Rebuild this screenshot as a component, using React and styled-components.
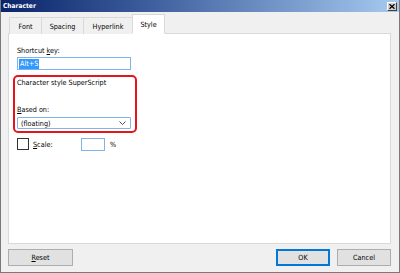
import React from "react"
import styled, { createGlobalStyle } from "styled-components"

const GlobalStyle = createGlobalStyle`
    html, body {
        margin: 0;
        padding: 0;
        background: #f0f0f0;
    }
    * {
        box-sizing: border-box;
    }
`

const Window = styled.div`
    width: 400px;
    height: 273px;
    background: #f0f0f0;
    border: 1px solid #7a7a7a;
    border-top: none;
    display: flex;
    flex-direction: column;
    font-family: "DejaVu Sans Condensed", "Liberation Sans", Arial, sans-serif;
    font-size: 7.2px;
    color: #000;
    overflow: hidden;
`

const TitleBar = styled.div`
    height: 12px;
    display: flex;
    align-items: center;
    justify-content: space-between;
    padding: 0 2px 0 2px;
    background: linear-gradient(to right, #0a246a 0%, #3a5a9a 35%, #a6caf0 100%);
`

const Title = styled.span`
    color: #fff;
    font-weight: bold;
    font-size: 6.6px;
`

const CloseButton = styled.div`
    width: 10px;
    height: 9px;
    background: #d4d0c8;
    border: 1px solid #fff;
    border-right-color: #404040;
    border-bottom-color: #404040;
    display: flex;
    align-items: center;
    justify-content: center;
`

const Body = styled.div`
    flex: 1;
    display: flex;
    flex-direction: column;
    padding: 2px 8px 0 7px;
`

const TabRow = styled.div`
    display: flex;
    align-items: flex-end;
    height: 20px;
    margin-bottom: -1px;
    position: relative;
    z-index: 1;
`

const Tab = styled.div`
    width: ${p => p.$w}px;
    height: ${p => (p.$active ? 20 : 17)}px;
    display: flex;
    align-items: center;
    justify-content: center;
    padding-top: ${p => (p.$active ? 0 : 1)}px;
    background: ${p => (p.$active ? "#fff" : "#f0f0f0")};
    border: 1px solid #d9d9d9;
    border-bottom: ${p => (p.$active ? "1px solid #fff" : "none")};
    margin-left: ${p => (p.$first ? 1 : -1)}px;
`

const Panel = styled.div`
    height: 211px;
    background: #fff;
    border: 1px solid #d9d9d9;
    padding: 12px 7px 0 8px;
    display: flex;
    flex-direction: column;
`

const Label = styled.div`
    height: 10px;
    line-height: 10px;
    margin-bottom: ${p => p.$gap || 0}px;
`

const Underline = styled.span`
    text-decoration: underline;
`

const TextInput = styled.div`
    width: ${p => p.$w}px;
    height: 13px;
    border: 1px solid #7eb4ea;
    display: flex;
    align-items: center;
    padding-left: 1px;
`

const Selected = styled.span`
    background: #3399ff;
    color: #fff;
    line-height: 10px;
    padding: 0 1px;
`

const Highlight = styled.div`
    margin: 5px 0 0 -4px;
    width: 124px;
    height: 58px;
    border: 2px solid #e8141b;
    border-radius: 5px;
    padding: 1px 4px 0 2px;
    display: flex;
    flex-direction: column;
`

const Spacer = styled.div`
    height: ${p => p.$h}px;
`

const Select = styled.div`
    width: 114px;
    height: 12px;
    border: 1px solid #7eb4ea;
    border-radius: 1px;
    display: flex;
    align-items: center;
    justify-content: space-between;
    padding: 0 4px 0 3px;
`

const CheckRow = styled.div`
    display: flex;
    align-items: center;
    margin-top: 5px;
    height: 12px;
`

const CheckBox = styled.div`
    width: 12px;
    height: 12px;
    border: 1px solid #333;
    background: #fff;
    margin-right: 4px;
`

const ScaleLabel = styled.span`
    width: 48px;
`

const Percent = styled.span`
    margin-left: 5px;
`

const Footer = styled.div`
    display: flex;
    align-items: center;
    justify-content: space-between;
    margin-top: 5px;
`

const ButtonGroup = styled.div`
    display: flex;
    gap: 7px;
`

const Button = styled.div`
    width: ${p => p.$w}px;
    height: 17px;
    display: flex;
    align-items: center;
    justify-content: center;
    background: #e1e1e1;
    border: 1px solid ${p => (p.$default ? "#0078d7" : "#adadad")};
    box-shadow: ${p => (p.$default ? "inset 0 0 0 1px #0078d7" : "none")};
`

const Chevron = () => (
    <svg width="7" height="4" viewBox="0 0 7 4">
        <path d="M0.5 0.5 L3.5 3.5 L6.5 0.5" fill="none" stroke="#333" strokeWidth="0.9" />
    </svg>
)

const CloseIcon = () => (
    <svg width="6" height="5" viewBox="0 0 6 5">
        <path d="M0.5 0.3 L5.5 4.7 M5.5 0.3 L0.5 4.7" stroke="#000" strokeWidth="1.3" />
    </svg>
)

const App = () => (
    <>
        <GlobalStyle />
        <Window>
            <TitleBar>
                <Title>Character</Title>
                <CloseButton><CloseIcon /></CloseButton>
            </TitleBar>
            <Body>
                <TabRow>
                    <Tab $w={33} $first>Font</Tab>
                    <Tab $w={43}>Spacing</Tab>
                    <Tab $w={50}>Hyperlink</Tab>
                    <Tab $w={33} $active>Style</Tab>
                </TabRow>
                <Panel>
                    <Label $gap={1}>Shortcut <Underline>k</Underline>ey:</Label>
                    <TextInput $w={114}><Selected>Alt+S</Selected></TextInput>
                    <Highlight>
                        <Label>Character style SuperScript</Label>
                        <Spacer $h={17} />
                        <Label $gap={2}><Underline>B</Underline>ased on:</Label>
                        <Select>
                            <span>(floating)</span>
                            <Chevron />
                        </Select>
                    </Highlight>
                    <CheckRow>
                        <CheckBox />
                        <ScaleLabel><Underline>S</Underline>cale:</ScaleLabel>
                        <TextInput $w={24} />
                        <Percent>%</Percent>
                    </CheckRow>
                </Panel>
                <Footer>
                    <Button $w={65}><span><Underline>R</Underline>eset</span></Button>
                    <ButtonGroup>
                        <Button $w={54} $default>OK</Button>
                        <Button $w={54}>Cancel</Button>
                    </ButtonGroup>
                </Footer>
            </Body>
        </Window>
    </>
)

export default App
